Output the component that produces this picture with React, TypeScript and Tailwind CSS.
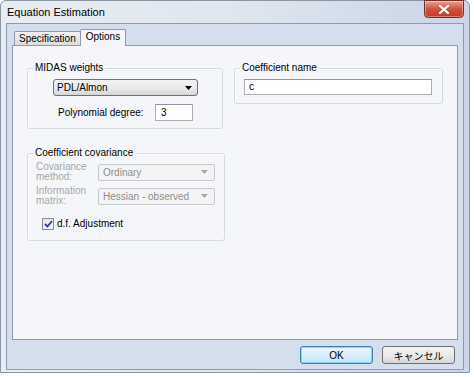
import { useState } from "react";

const ui = { fontFamily: '"Liberation Sans", Arial, "Noto Sans CJK JP", sans-serif' };

const Arrow = ({ color = "#000" }: { color?: string }) => (
  <svg width="7" height="4" viewBox="0 0 7 4">
    <path d="M0 0h7L3.5 4z" fill={color} />
  </svg>
);

const Group = ({ title, className, children }: { title: string; className: string; children: React.ReactNode }) => (
  <fieldset className={`border border-[#d5dae2] rounded-[3px] shadow-[inset_1px_1px_0_#fff] ${className}`}>
    <legend className="ml-[5px] px-[2px] text-[10px] leading-[12px] text-black">{title}</legend>
    {children}
  </fieldset>
);

const DisabledCombo = ({ value }: { value: string }) => (
  <div className="w-[117px] h-[17px] border border-[#c5c9cf] rounded-[2px] bg-[#f4f4f4] flex items-center justify-between pl-[4px] pr-[6px] text-[10px] text-[#8d8d8d]">
    <span>{value}</span>
    <Arrow color="#a8a8a8" />
  </div>
);

const App = () => {
  const [dfAdjust, setDfAdjust] = useState(true);
  const [tab, setTab] = useState("Options");

  return (
    <div className="w-[474px] h-[377px] bg-white overflow-hidden" style={ui}>
      <div className="w-[470px] h-[373px] rounded-t-[6px] border border-[#8a96a6] bg-gradient-to-r from-[#e9edf2] via-[#dfe6ee] to-[#c9d6e6] flex flex-col px-[5px] pb-[2px]">
        {/* title bar */}
        <div className="h-[25px] flex justify-between">
          <div className="pl-[1px] pt-[4px] text-[11px] leading-[14px] text-black">Equation Estimation</div>
          <button className="w-[40px] h-[18px] -mt-[1px] rounded-b-[4px] border border-[#7a2a22] bg-gradient-to-b from-[#e8a596] via-[#d0503f] to-[#c23a28] flex items-center justify-center shadow-[inset_0_0_0_1px_rgba(255,255,255,0.35)]">
            <svg width="10" height="9" viewBox="0 0 10 9">
              <path d="M1 1l8 7M9 1L1 8" stroke="#fff" strokeWidth="2.2" strokeLinecap="square" />
            </svg>
          </button>
        </div>

        {/* client area */}
        <div className="flex-1 border border-[#8c9bb0] bg-[#d4deec] flex flex-col px-[5px] pt-[4px] pb-[5px]">
          <div className="h-[17px] flex items-end pl-[2px]">
            <button
              onClick={() => setTab("Specification")}
              className={`h-[14px] px-[4px] border border-b-0 border-[#8e9aab] rounded-t-[2px] text-[10px] leading-[12px] text-black ${tab === "Specification" ? "bg-[#f4f6f9]" : "bg-gradient-to-b from-[#f2f2f2] to-[#dcdcdc]"}`}
            >
              Specification
            </button>
            <button
              onClick={() => setTab("Options")}
              className="h-[17px] -ml-[1px] -mb-[1px] px-[5px] pb-[2px] border border-b-0 border-[#8e9aab] rounded-t-[2px] bg-[#f4f6f9] text-[10px] leading-[12px] text-black relative"
            >
              Options
            </button>
          </div>

          <div className="h-[295px] border border-[#8e9aab] bg-[#f4f6f9] flex gap-[11px] pl-[14px] pt-[16px]">
            <div className="w-[196px] flex flex-col">
              <Group title="MIDAS weights" className="h-[67px]">
                <div className="pl-[25px] pt-[5px]">
                  <div className="w-[145px] h-[17px] border border-[#707070] rounded-[3px] bg-gradient-to-b from-[#f3f3f3] via-[#ebebeb] to-[#d6d6d6] flex items-center justify-between pl-[3px] pr-[5px] text-[10px] text-black">
                    <span>PDL/Almon</span>
                    <Arrow />
                  </div>
                  <div className="flex items-center mt-[8px] pl-[5px]">
                    <span className="w-[97px] text-[10px] text-black">Polynomial degree:</span>
                    <div className="w-[38px] h-[17px] border border-[#abadb3] border-t-[#8f939c] bg-white pl-[5px] text-[10px] leading-[15px] text-black">3</div>
                  </div>
                </div>
              </Group>

              <Group title="Coefficient covariance" className="h-[94px] mt-[18px] w-[198px]">
                <div className="pl-[8px] pt-[3px]">
                  <div className="flex items-center h-[20px]">
                    <span className="w-[62px] text-[10px] leading-[10px] text-[#a7a7a7]">
                      Covariance
                      <br />
                      method:
                    </span>
                    <DisabledCombo value="Ordinary" />
                  </div>
                  <div className="flex items-center h-[20px] mt-[4px]">
                    <span className="w-[62px] text-[10px] leading-[10px] text-[#a7a7a7]">
                      Information
                      <br />
                      matrix:
                    </span>
                    <DisabledCombo value="Hessian - observed" />
                  </div>
                  <label className="flex items-center gap-[3px] mt-[10px] ml-[6px] text-[10px] text-black">
                    <span
                      onClick={() => setDfAdjust(!dfAdjust)}
                      className="w-[12px] h-[12px] border border-[#8f8f8f] bg-gradient-to-br from-[#dfe3ea] to-[#f7f8fa] flex items-center justify-center"
                    >
                      {dfAdjust && (
                        <svg width="9" height="8" viewBox="0 0 9 8">
                          <path d="M1 4l2.5 2.5L8 1" stroke="#2b3f8f" strokeWidth="1.8" fill="none" />
                        </svg>
                      )}
                    </span>
                    d.f. Adjustment
                  </label>
                </div>
              </Group>
            </div>

            <div className="w-[209px]">
              <Group title="Coefficient name" className="h-[42px]">
                <div className="pl-[9px] pt-[5px]">
                  <div className="w-[188px] h-[16px] border border-[#abadb3] border-t-[#8f939c] bg-white pl-[4px] text-[10px] leading-[13px] text-black">c</div>
                </div>
              </Group>
            </div>
          </div>

          <div className="flex justify-end gap-[9px] mt-[6px] pr-[3px]">
            <button className="w-[73px] h-[18px] rounded-[3px] border border-[#3c7fb1] bg-gradient-to-b from-[#eaf6fd] via-[#d9f0fc] to-[#bee6fd] shadow-[inset_0_0_0_1px_#8fd0f4] text-[10px] text-black">
              OK
            </button>
            <button className="w-[73px] h-[18px] rounded-[3px] border border-[#707070] bg-gradient-to-b from-[#f2f2f2] via-[#ebebeb] to-[#d5d5d5] text-[10px] text-black" style={{ fontFamily: '"Noto Sans CJK JP", sans-serif' }}>
              キャンセル
            </button>
          </div>
        </div>
      </div>
    </div>
  );
};

export default App;
